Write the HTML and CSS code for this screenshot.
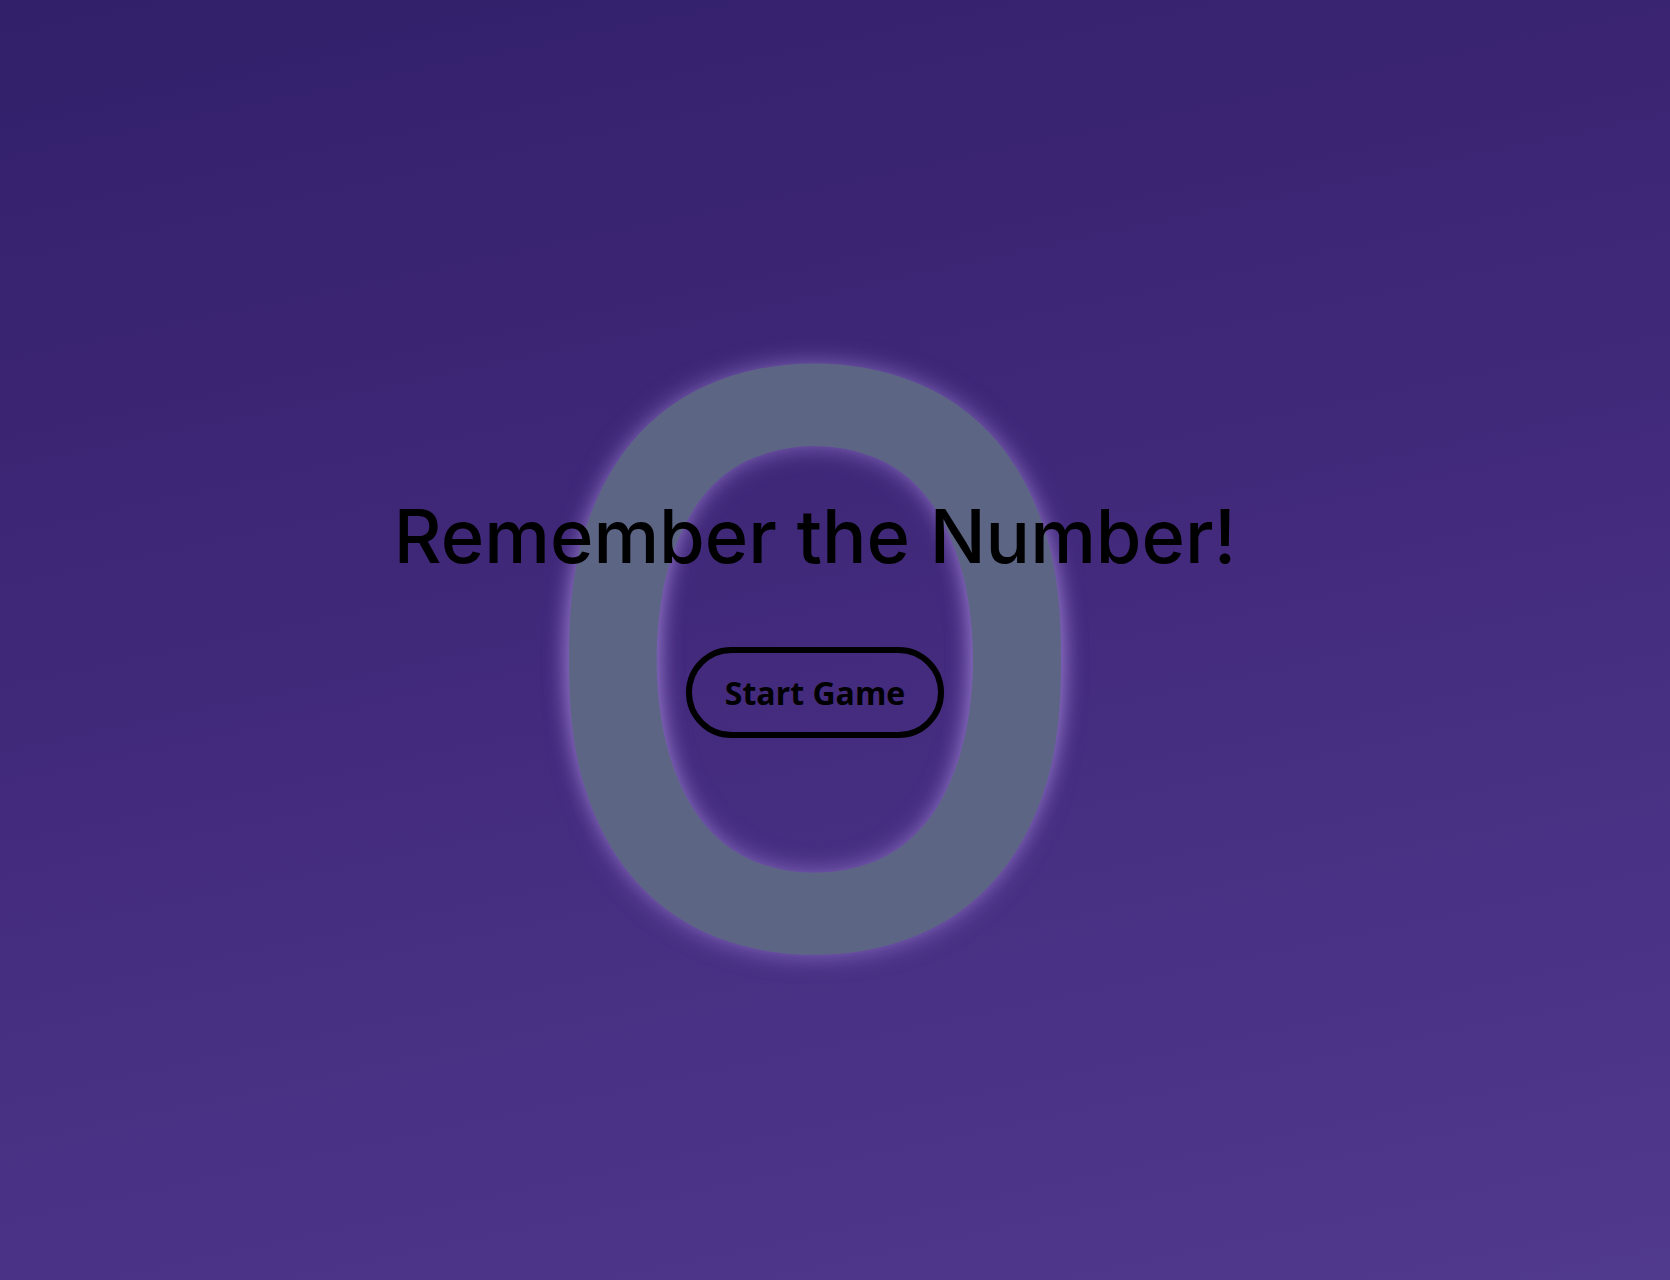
FILE: index.html
```html
<!DOCTYPE html>
<html lang="en">
<head>
<meta charset="utf-8">
<title>Remember the Number!</title>
<link rel="stylesheet" href="styles.css">
</head>
<body>
<main class="stage">
  <div class="digit" aria-hidden="true">0</div>
  <h1 class="title">Remember the Number!</h1>
  <button class="start" type="button">Start Game</button>
</main>
</body>
</html>
```

FILE: styles.css
```css
* { box-sizing: border-box; }
html, body { margin: 0; padding: 0; }
body {
  min-height: 1280px;
  overflow: hidden;
  background: linear-gradient(168deg, #32206a 0%, #432a7c 50%, #503a8e 100%);
  font-family: "Inter", "Liberation Sans", sans-serif;
  color: #000;
}
.stage {
  position: relative;
  min-height: 1280px;
  overflow: hidden;
  display: flex;
  flex-direction: column;
  align-items: center;
  justify-content: center;
  padding-right: 40px;
  padding-bottom: 50px;
}
.digit {
  position: absolute;
  top: 0; left: 0; right: 40px; bottom: 0;
  display: flex;
  align-items: center;
  justify-content: center;
  font-family: "Lato", sans-serif;
  font-weight: 400;
  font-size: 775px;
  line-height: 1;
  color: #5d6585;
  text-shadow:
    0 -12px 0 #5d6585,
    0 12px 0 #5d6585,
    0 -12px 22px rgba(178, 148, 232, 0.6),
    0 12px 22px rgba(178, 148, 232, 0.6);
  transform: translateY(-3px) scaleX(1.22);
  user-select: none;
  z-index: 0;
}
.title {
  position: relative;
  z-index: 1;
  margin: 0 0 66px;
  font-size: 74px;
  font-weight: 500;
  line-height: 1.2;
  letter-spacing: 0;
}
.start {
  position: relative;
  z-index: 1;
  font-family: "Open Sans", sans-serif;
  font-weight: 700;
  font-size: 32px;
  line-height: 1.36;
  color: #000;
  background: transparent;
  border: 6px solid #000;
  border-radius: 50px;
  padding: 18px 33px;
  cursor: pointer;
}
```
